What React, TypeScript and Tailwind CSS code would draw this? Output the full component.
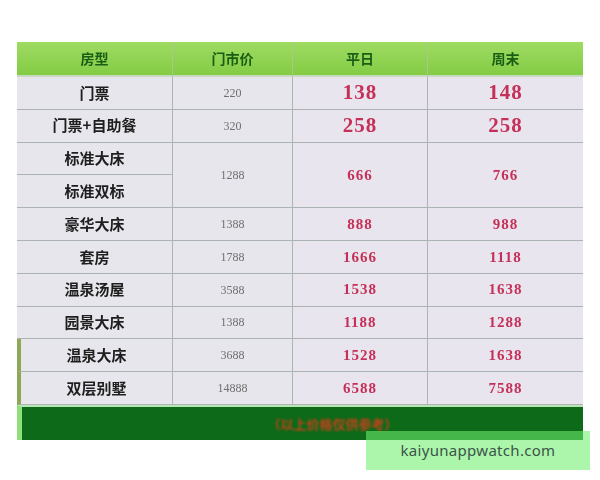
import React from 'react';

type Row = { name: string; list?: string; weekday?: string; weekend?: string; big?: boolean };

const rows: Row[] = [
  { name: '门票', list: '220', weekday: '138', weekend: '148', big: true },
  { name: '门票+自助餐', list: '320', weekday: '258', weekend: '258', big: true },
  { name: '标准大床', list: '1288', weekday: '666', weekend: '766' },
  { name: '标准双标' },
  { name: '豪华大床', list: '1388', weekday: '888', weekend: '988' },
  { name: '套房', list: '1788', weekday: '1666', weekend: '1118' },
  { name: '温泉汤屋', list: '3588', weekday: '1538', weekend: '1638' },
  { name: '园景大床', list: '1388', weekday: '1188', weekend: '1288' },
  { name: '温泉大床', list: '3688', weekday: '1528', weekend: '1638' },
  { name: '双层别墅', list: '14888', weekday: '6588', weekend: '7588' }
];

const cjk = "font-['Noto_Sans_CJK_SC','Noto_Sans',sans-serif]";
const serif = "font-['Liberation_Serif','Noto_Sans_CJK_SC',serif]";

const App = () => {
  return (
    <div className="relative w-[600px] h-[480px] bg-white overflow-hidden pt-[42px] pl-[17px]">
      <div className="w-[566px] blur-[0.6px]">
        {/* Price table */}
        <div className="grid grid-cols-[156px_120px_135px_155px] grid-rows-[35px_repeat(10,32.8px)] bg-[#e6e6ec]">
          {['房型', '门市价', '平日', '周末'].map((h, i) => (
            <div
              key={h}
              className={`flex items-center justify-center bg-gradient-to-b from-[#9edb62] to-[#84cc44] text-[#1a5e16] text-[14px] font-bold border-b-2 border-[#c9d8c0] ${cjk} ${i < 3 ? 'border-r border-r-[#a8c890]' : ''}`}
            >
              {h}
            </div>
          ))}

          {rows.map((r, idx) => (
            <React.Fragment key={r.name}>
              <div
                className={`flex items-center justify-center border-r border-b border-[#abb3b3] text-[#1e1e1e] text-[15px] font-bold ${cjk} ${idx >= 8 ? 'border-l-4 border-l-[#8ea858]' : ''}`}
              >
                {r.name}
              </div>
              {r.list && (
                <>
                  <div
                    className={`flex items-center justify-center border-r border-b border-[#abb3b3] text-[#707070] text-[12px] ${serif} ${idx === 2 ? 'row-span-2' : ''}`}
                  >
                    {r.list}
                  </div>
                  <div
                    className={`flex items-center justify-center border-r border-b border-[#abb3b3] bg-[#e9e5ee] text-[#c53058] font-bold tracking-[1px] ${serif} ${r.big ? 'text-[21px]' : 'text-[15px]'} ${idx === 2 ? 'row-span-2' : ''}`}
                  >
                    {r.weekday}
                  </div>
                  <div
                    className={`flex items-center justify-center border-b border-[#abb3b3] bg-[#e9e5ee] text-[#c53058] font-bold tracking-[1px] ${serif} ${r.big ? 'text-[21px]' : 'text-[15px]'} ${idx === 2 ? 'row-span-2' : ''}`}
                  >
                    {r.weekend}
                  </div>
                </>
              )}
            </React.Fragment>
          ))}
        </div>

        {/* Footer note */}
        <div className="h-[35px] flex items-center justify-center bg-[#0c6a18] border-l-[5px] border-[#8fe07a] border-t-2 border-t-[#b6e6b6]">
          <span className={`text-[#c8401c] text-[13px] font-bold blur-[1.2px] ml-[60px] ${cjk}`}>
            （以上价格仅供参考）
          </span>
        </div>
      </div>

      {/* Watermark */}
      <div className="absolute left-[366px] top-[431px] w-[224px] h-[39px] bg-[rgba(110,240,110,0.58)] flex items-center justify-center">
        <span className="text-[#3d5448] text-[15px] tracking-[0.3px] font-['Noto_Sans','Open_Sans',sans-serif]">
          kaiyunappwatch.com
        </span>
      </div>
    </div>
  );
};

export default App;
